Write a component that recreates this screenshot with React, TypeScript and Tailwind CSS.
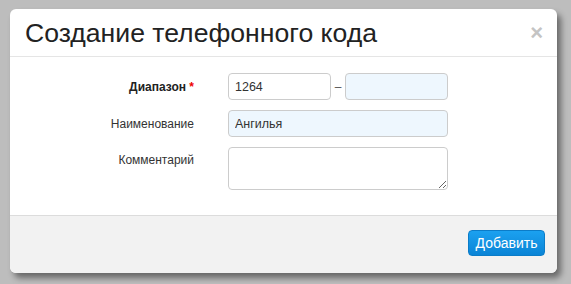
import React from 'react';

const font = { fontFamily: '"Liberation Sans", Arial, sans-serif' };

const App: React.FC = () => {
  return (
    <div className="w-[571px] h-[284px] bg-[#bdbdbd] pt-[9px] pl-[10px]" style={font}>
      <div className="w-[547px] h-[264px] bg-white rounded-[6px] shadow-[4px_5px_6px_rgba(0,0,0,0.45)] flex flex-col overflow-hidden">
        <div className="h-[48px] flex items-center justify-between pl-[15px] pr-[14px] border-b border-[#e5e5e5]">
          <h1 className="text-[26.6px] leading-none text-[#222] mt-[1px]">Создание телефонного кода</h1>
          <span className="text-[22px] font-bold text-[#c4c4c4] leading-none">×</span>
        </div>

        <div className="flex-1 pt-[16px] flex flex-col gap-[10px] text-[12px] text-[#333]">
          <div className="flex items-center">
            <label className="w-[184px] text-right font-bold text-[#222]">
              Диапазон <span className="text-[#e00]">*</span>
            </label>
            <div className="ml-[34px] flex items-center">
              <input
                defaultValue="1264"
                className="w-[103px] h-[27px] border border-[#ccc] rounded-[4px] px-[6px] text-[12.5px] text-[#333] bg-white outline-none"
              />
              <span className="w-[14px] text-center text-[#555]">–</span>
              <input className="w-[103px] h-[27px] border border-[#ccc] rounded-[4px] px-[6px] bg-[#eef7fe] outline-none" />
            </div>
          </div>

          <div className="flex items-center">
            <label className="w-[184px] text-right text-[#333]">Наименование</label>
            <input
              defaultValue="Ангилья"
              className="ml-[34px] w-[220px] h-[27px] border border-[#ccc] rounded-[4px] px-[6px] text-[12.5px] text-[#333] bg-[#eef7fe] outline-none"
            />
          </div>

          <div className="flex items-start">
            <label className="w-[184px] text-right text-[#333] pt-[4px]">Комментарий</label>
            <textarea className="ml-[34px] w-[220px] h-[43px] border border-[#ccc] rounded-[4px] px-[6px] bg-white outline-none resize-y block" />
          </div>
        </div>

        <div className="h-[58px] bg-[#f2f2f2] border-t border-[#dcdcdc] flex justify-end items-start pt-[14px] pr-[12px]">
          <button className="h-[26px] w-[77px] rounded-[4px] text-white text-[14px] bg-gradient-to-b from-[#1ba1f0] to-[#0a84d6] border border-[#0b7cc8]">
            Добавить
          </button>
        </div>
      </div>
    </div>
  );
};

export default App;
